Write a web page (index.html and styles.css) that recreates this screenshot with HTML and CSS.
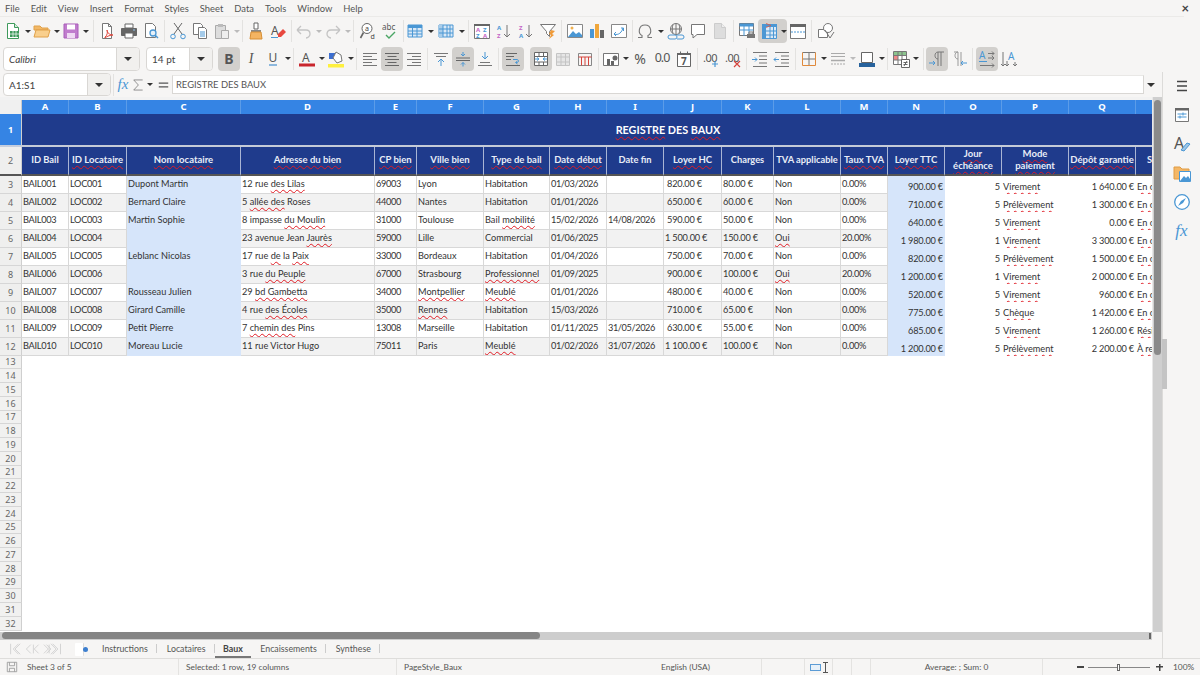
FILE: index.html
```html
<!DOCTYPE html>
<html lang="fr">
<head>
<meta charset="utf-8">
<title>Baux</title>
<link rel="stylesheet" href="styles.css">
</head>
<body>
<div class="app">
<nav class="menu">
<span>File</span><span>Edit</span><span>View</span><span>Insert</span><span>Format</span><span>Styles</span><span>Sheet</span><span>Data</span><span>Tools</span><span>Window</span><span>Help</span>
<b class="close">×</b>
</nav>

<div class="toolbar t1">
<i class="btn"><svg viewBox="0 0 18 18"><path d="M3.500 1.500h7l4 4v11h-11z" fill="#fff" stroke="#3f9a5c"/><path d="M10.500 1.500v4h4" fill="#d5ecd9" stroke="#3f9a5c"/><path d="M6 9h9v6H6z" fill="#3f9a5c"/><path d="M9 9v6M12 9v6M6 12h9" stroke="#fff" stroke-width=".7"/></svg></i><i class="dd"></i>
<i class="btn"><svg viewBox="0 0 18 18"><path d="M1 4h6l2 2h6v2H1z" fill="#f2b866" stroke="#e0a14a"/><path d="M1 15l2-7h14l-2 7z" fill="#f9cf8d" stroke="#e0a14a"/></svg></i><i class="dd"></i>
<i class="btn"><svg viewBox="0 0 18 18"><path d="M2 2h14v14H2z" fill="#c07ccd" stroke="#a95cb9"/><path d="M5 2.500h8v5H5z" fill="#fff"/><path d="M5 11h8v5H5z" fill="#efd9f3"/></svg></i><i class="dd"></i>
<i class="sep w7"></i>
<i class="btn"><svg viewBox="0 0 18 18"><path d="M4.500 1.500h6l3 3v12h-9z" fill="#fff" stroke="#777"/><path d="M10.500 1.500v3h3" fill="none" stroke="#777"/><path d="M7 15c2-1 3-5 2-7 0 3 3 5 6 5-2 0-6 1-8 3z" fill="none" stroke="#e0483e"/></svg></i>
<i class="btn"><svg viewBox="0 0 18 18"><path d="M5 2h8v4H5z" fill="#fff" stroke="#666"/><path d="M1.500 6.500h15v7h-15z" fill="#666" stroke="#666"/><path d="M5 11h8v5H5z" fill="#fff" stroke="#666"/><path d="M13 8h2" stroke="#8ec1ea"/></svg></i>
<i class="btn"><svg viewBox="0 0 18 18"><path d="M3.500 1.500h7l3 3v11h-10z" fill="#fff" stroke="#777"/><circle cx="11" cy="11" r="3" fill="#e6f1fa" stroke="#4a97d4" stroke-width="1.300"/><path d="M13 13l3 3" stroke="#4a97d4" stroke-width="1.500"/></svg></i>
<i class="sep"></i>
<i class="btn"><svg viewBox="0 0 18 18" fill="none" stroke="#666"><path d="M5 1l8 11M13 1L5 12"/><circle cx="4" cy="14.500" r="2.300" stroke="#4a97d4"/><circle cx="14" cy="14.500" r="2.300" stroke="#4a97d4"/></svg></i>
<i class="btn"><svg viewBox="0 0 18 18"><path d="M2.500 1.500h7l2 2v9h-9z" fill="#fff" stroke="#777"/><path d="M7.500 5.500h6l2 2v9h-8z" fill="#fff" stroke="#777"/><path d="M9 10h5M9 12h5M9 14h5" stroke="#4a97d4"/></svg></i>
<i class="btn"><svg viewBox="0 0 18 18"><path d="M2.500 3.500h10v13h-10z" fill="#ddd" stroke="#aaa"/><path d="M5 2h5v3H5z" fill="#bbb"/><path d="M8.500 8.500h7v8h-7z" fill="#eee" stroke="#aaa"/></svg></i><i class="dd off"></i>
<i class="sep"></i>
<i class="btn"><svg viewBox="0 0 18 18"><path d="M7 1h4v6H7z" fill="#fff" stroke="#666"/><path d="M4 8h10v2H4z" fill="#888"/><path d="M4 10h10l1 7H3z" fill="#f4b462" stroke="#d78f35"/></svg></i>
<i class="btn"><svg viewBox="0 0 18 18"><text x="2" y="13" class="ig">A</text><path d="M2 15.500h7" stroke="#4a97d4"/><path d="M9 12l5-5 3 3-5 5H9z" fill="#e8483f"/></svg></i>
<i class="sep n4"></i>
<i class="btn"><svg viewBox="0 0 18 18" fill="none" stroke="#c4c4c4" stroke-width="1.300"><path d="M2 8l4-4M2 8l4 4M2 8h9c3 0 4 2 4 4s-2 4-4 4"/></svg></i><i class="dd off"></i>
<i class="btn"><svg viewBox="0 0 18 18" fill="none" stroke="#c4c4c4" stroke-width="1.300"><path d="M16 8l-4-4M16 8l-4 4M16 8H7c-3 0-4 2-4 4s2 4 4 4"/></svg></i><i class="dd off"></i>
<i class="sep w6"></i>
<i class="btn"><svg viewBox="0 0 18 18"><circle cx="8" cy="6.500" r="5" fill="#fff" stroke="#666"/><path d="M4.500 10.500L1.500 16" stroke="#666" stroke-width="1.600"/><text x="6" y="9" class="is">a</text><text x="11.500" y="17" class="is">d</text></svg></i>
<i class="btn"><svg viewBox="0 0 18 18"><text x="1" y="8" class="it">abc</text><path d="M5 13l3 3 6-6" fill="none" stroke="#4aa564" stroke-width="1.400"/></svg></i>
<i class="sep n3"></i>
<i class="btn"><svg viewBox="0 0 18 18"><path d="M2 3h14v12H2z" fill="#dbe9f6" stroke="#4a97d4"/><path d="M2 3h14v3H2z" fill="#4a97d4"/><path d="M2 9h14M2 12h14M6.500 3v12M11 3v12" stroke="#4a97d4"/></svg></i><i class="dd wide"></i>
<i class="btn"><svg viewBox="0 0 18 18"><path d="M2 3h14v12H2z" fill="#dbe9f6" stroke="#4a97d4"/><path d="M2 3h4v12H2z" fill="#a9cdea"/><path d="M2 7h14M2 11h14M6 3v12M10 3v12M13 3v12" stroke="#4a97d4"/></svg></i><i class="dd wide"></i>
<i class="sep"></i>
<i class="btn"><svg viewBox="0 0 18 18"><path d="M1.500 2.500h15v14h-15z" fill="#fff" stroke="#777"/><path d="M1 2h16v2H1z" fill="#666"/><text x="3" y="9.500" class="ix p">A</text><text x="10" y="9.500" class="ix b">Z</text><text x="3" y="15.500" class="ix b">Z</text><text x="10" y="15.500" class="ix p">A</text></svg></i>
<i class="btn"><svg viewBox="0 0 18 18"><text x="2" y="8" class="ix b">A</text><text x="2" y="16" class="ix p">Z</text><path d="M12 3v12M9 12l3 3 3-3" fill="none" stroke="#777"/></svg></i>
<i class="btn"><svg viewBox="0 0 18 18"><text x="2" y="8" class="ix p">Z</text><text x="2" y="16" class="ix b">A</text><path d="M12 3v12M9 12l3 3 3-3" fill="none" stroke="#777"/></svg></i>
<i class="btn"><svg viewBox="0 0 18 18"><path d="M1.500 2.500h15l-6 7v5l-3-3v-2z" fill="#fff" stroke="#777"/><path d="M12 8l4 1-3 3 2 1-5 4 2-4-2-1z" fill="#ef9a38"/></svg></i>
<i class="sep"></i>
<i class="btn"><svg viewBox="0 0 18 18"><path d="M1.500 2.500h15v13h-15z" fill="#fff" stroke="#888"/><path d="M2 15l5-6 3 3 3-2 3 3v2z" fill="#4a97d4"/><circle cx="6" cy="6" r="1.500" fill="#f0b04f"/></svg></i>
<i class="btn"><svg viewBox="0 0 18 18"><path d="M2 7h4v9H2z" fill="#4a97d4"/><path d="M7 2h4v14H7z" fill="#f0a73c"/><path d="M12 8h4v8h-4z" fill="#666"/></svg></i>
<i class="btn"><svg viewBox="0 0 18 18"><path d="M1.500 2.500h15v13h-15z" fill="#fff" stroke="#888"/><path d="M4 12c2 1 7 1 9-6M11 6h2.500v3M6 14l-2-2 2-2" fill="none" stroke="#4a97d4"/></svg></i>
<i class="sep n4"></i>
<i class="btn"><svg viewBox="0 0 18 18"><path d="M2 15.500h4v-2C2 12 2 3 9 3s7 9 3 10.500v2h4" fill="none" stroke="#777" stroke-width="1.100"/></svg></i><i class="dd wide"></i>
<i class="btn"><svg viewBox="0 0 18 18" fill="none" stroke="#777"><circle cx="9" cy="7" r="5.500"/><path d="M3.500 7h11M9 1.500v11M6 2.500c-1 3-1 6 0 9M12 2.500c1 3 1 6 0 9"/><path d="M3 13h5a2 2 0 0 1 0 4H3a2 2 0 0 1 0-4zM10 13h5a2 2 0 0 1 0 4h-5" stroke="#4a97d4"/></svg></i>
<i class="btn"><svg viewBox="0 0 18 18"><path d="M2.500 2.500h13v10H8l-4 3.500v-3.500H2.500z" fill="#fff" stroke="#777"/></svg></i>
<i class="btn"><svg viewBox="0 0 18 18"><path d="M3.500 1.500h7l4 4v11h-11z" fill="#ddd" stroke="#ccc"/><path d="M10.500 1.500v4h4" fill="#eee" stroke="#ccc"/></svg></i>
<i class="sep"></i>
<i class="btn"><svg viewBox="0 0 18 18"><path d="M1.500 1.500h14v12h-14z" fill="#fff" stroke="#777"/><path d="M1.500 1.500h14v3h-14z" fill="#4a97d4"/><path d="M1.500 8h14M6 4v10M11 4v10" stroke="#4a97d4"/><path d="M9 12h8v4H9z" fill="#777"/><path d="M11 10h4v2h-4z" fill="#fff" stroke="#777"/></svg></i>
<span class="hl"><i class="btn"><svg viewBox="0 0 18 18"><path d="M2.500 2.500h14v14h-14z" fill="#dbe9f6" stroke="#4a97d4"/><path d="M2 2h15v3H2zM2 2h4v15H2z" fill="#4a97d4"/><path d="M2 9h15M2 13h15M10 4v13M13.500 4v13" stroke="#4a97d4"/><path d="M6 1.500l5 2-5 2" fill="none" stroke="#e9573f" stroke-width=".8"/></svg></i><i class="dd"></i></span>
<i class="btn"><svg viewBox="0 0 18 18"><path d="M1.500 2.500h15v14h-15z" fill="#fff" stroke="#777"/><path d="M1 2h16v3H1z" fill="#666"/><path d="M2 10h14" stroke="#4a97d4" stroke-dasharray="2 1"/></svg></i>
<i class="sep w6"></i>
<i class="btn"><svg viewBox="0 0 18 18" fill="none" stroke="#777"><path d="M1.500 7.500h9v8h-9z" fill="#fff"/><circle cx="11" cy="6" r="4.500" fill="#fff"/><path d="M8 8l5 8 4-6"/></svg></i>
</div>

<div class="toolbar t2">
<span class="combo name"><em>Calibri</em><i class="cb"></i></span>
<span class="combo size"><em>14 pt</em><i class="cb"></i></span>
<span class="hl"><i class="btn"><b class="gl bold">B</b></i></span>
<i class="btn"><b class="gl ital">I</b></i>
<i class="btn"><b class="gl und">U</b></i><i class="dd"></i>
<i class="sep"></i>
<i class="btn"><svg viewBox="0 0 18 18"><text x="4" y="12" class="ig">A</text><path d="M1 13.500h16v3H1z" fill="#c9252d"/></svg></i><i class="dd"></i>
<i class="btn"><svg viewBox="0 0 18 18"><path d="M2 3h6v6H2z" fill="#3d6fd1"/><path d="M6 8l3-6 5 3 1 6-5 2z" fill="#fff" stroke="#777"/><path d="M1 14h16v3.500H1z" fill="#fef03f"/></svg></i><i class="dd"></i>
<i class="sep"></i>
<i class="btn"><svg viewBox="0 0 18 18" stroke="#777"><path d="M2 3.500h14M2 6.500h9M2 9.500h14M2 12.500h9M2 15.500h14"/></svg></i>
<span class="hl"><i class="btn"><svg viewBox="0 0 18 18" stroke="#666"><path d="M2 3.500h14M4.500 6.500h9M2 9.500h14M4.500 12.500h9M2 15.500h14"/></svg></i></span>
<i class="btn"><svg viewBox="0 0 18 18" stroke="#777"><path d="M2 3.500h14M7 6.500h9M2 9.500h14M7 12.500h9M2 15.500h14"/></svg></i>
<i class="sep"></i>
<i class="btn"><svg viewBox="0 0 18 18" fill="none" stroke="#777"><path d="M2 3.500h14M4 6.500h10"/><path d="M9 16V9M6 12l3-3 3 3" stroke="#4a97d4"/></svg></i>
<span class="hl"><i class="btn"><svg viewBox="0 0 18 18" fill="none" stroke="#666"><path d="M2 8h14M2 10.500h14"/><path d="M9 2v4M7 4l2 2 2-2M9 16.500v-4M7 14.500l2-2 2 2" stroke="#4a97d4"/></svg></i></span>
<i class="btn"><svg viewBox="0 0 18 18" fill="none" stroke="#777"><path d="M2 15.500h14M4 12.500h10"/><path d="M9 2v7M6 6l3 3 3-3" stroke="#4a97d4"/></svg></i>
<i class="sep w6"></i>
<span class="hl"><i class="btn"><svg viewBox="0 0 18 18" fill="none" stroke="#666"><path d="M2 3.500h11M2 6.500h8M2 9.500h5M2 15.500h14"/><path d="M9 9.500h4c2 0 2 3 0 3h-1M13.500 11l-2 1.500 2 1.500" stroke="#4a97d4"/></svg></i></span>
<span class="hl sp6"><i class="btn"><svg viewBox="0 0 18 18" fill="none" stroke="#666"><path d="M2.500 2.500h13v13h-13z" fill="#fff"/><path d="M2.500 6.500h13M2.500 12h13M7 2.500v4M11.500 2.500v4M7 12v3.500M11.500 12v3.500"/><path d="M3 9h4M15 9h-4M5 7.500L7 9l-2 1.500M13 7.500L11 9l2 1.500" stroke="#4a97d4"/></svg></i></span>
<i class="btn"><svg viewBox="0 0 18 18" stroke="#c4c4c4"><path d="M2.500 3.500h13v12h-13z" fill="#e6e6e6"/><path d="M2.500 7h13M2.500 12h13M7 3.500v12M11.500 3.500v12"/></svg></i>
<i class="btn"><svg viewBox="0 0 18 18" fill="none" stroke="#d6453d"><path d="M2.500 3.500h13v12h-13z" stroke="#888"/><path d="M2.500 7h13M5.500 7v8.500M9 7v8.500M12.500 7v8.500"/></svg></i>
<i class="sep n4"></i>
<i class="btn"><svg viewBox="0 0 18 18"><path d="M1.500 3.500h15v12h-15z" fill="#fff" stroke="#777"/><path d="M5 9h3v6H5zM9 11h3v4H9z" fill="#666"/><circle cx="13" cy="8" r="2.500" fill="#666"/></svg></i><i class="dd"></i>
<i class="btn"><b class="gl pct">%</b></i>
<i class="btn"><b class="gl pct zz">0.0</b></i>
<i class="btn"><svg viewBox="0 0 18 18"><path d="M2.500 3.500h13v13h-13z" fill="#fff" stroke="#666"/><path d="M2 3h14v2H2zM5 1.500h1v3H5zM12 1.500h1v3h-1z" fill="#666"/><text x="6" y="15" class="ig mid">7</text></svg></i>
<i class="sep"></i>
<i class="btn"><svg viewBox="0 0 18 18"><text x="1" y="12" class="ig dec">.00</text><path d="M13 11v6M10 14h6" stroke="#4a97d4" stroke-width="1.200"/></svg></i>
<i class="btn"><svg viewBox="0 0 18 18"><text x="1" y="12" class="ig dec">.00</text><path d="M10 11l6 6M16 11l-6 6" stroke="#d6453d" stroke-width="1.200"/></svg></i>
<i class="sep"></i>
<i class="btn"><svg viewBox="0 0 18 18" fill="none" stroke="#777"><path d="M2 2.500h14M8 6h8M8 9.500h8M8 13h8M2 16.500h14"/><path d="M1 9.500h5M4 7.500l2 2-2 2" stroke="#4a97d4"/></svg></i>
<i class="btn"><svg viewBox="0 0 18 18" fill="none" stroke="#777"><path d="M2 2.500h14M8 6h8M8 9.500h8M8 13h8M2 16.500h14"/><path d="M6 9.500H1M3 7.500l-2 2 2 2" stroke="#4a97d4"/></svg></i>
<i class="sep"></i>
<i class="btn"><svg viewBox="0 0 18 18" fill="none" stroke="#777"><path d="M2.500 9h13M9 2.500v13M2.500 2.500h13"/><path d="M2.500 2.500v13h13v-13" stroke="#e08a3c"/></svg></i><i class="dd"></i>
<i class="btn"><svg viewBox="0 0 18 18" stroke="#aaa"><path d="M2 3.500h14M2 6.500h14" stroke-width="1.200"/><path d="M2 10.500h14" stroke-width="1.500"/><path d="M2 14h14" stroke-dasharray="2 1"/></svg></i><i class="dd off"></i>
<i class="btn"><svg viewBox="0 0 18 18"><path d="M3.500 2.500h11v10h-11z" fill="#fff" stroke="#666"/><path d="M1 13h16v4H1z" fill="#27629c"/></svg></i><i class="dd"></i>
<i class="sep"></i>
<i class="btn"><svg viewBox="0 0 18 18"><path d="M1.500 1.500h13v13h-13z" fill="#fff" stroke="#777"/><path d="M2 2h12v3H2z" fill="#8bc48d"/><path d="M2 5h4v5H2z" fill="#e88"/><path d="M1.500 5.500h13M1.500 10h13M6 2v12M10 2v12" stroke="#777"/><path d="M9.500 9.500h8v8h-8z" fill="#fff" stroke="#666"/><path d="M11.500 12.500h4M11.500 14.500h4M12 16l3-5" stroke="#666"/></svg></i><i class="dd"></i>
<i class="sep w7"></i>
<span class="hl"><i class="btn"><svg viewBox="0 0 18 18" fill="none" stroke="#777"><path d="M10 16V2h6M13 2v14M10 2C6 2 6 9 10 9"/><path d="M1 13h6M5 11l2 2-2 2" stroke="#4a97d4"/></svg></i></span>
<i class="btn"><svg viewBox="0 0 18 18" fill="none" stroke="#999"><path d="M6 16V2h-4M9 2v14M6 2c-4 0-4 7 0 7" transform="translate(2 0)"/><path d="M17 13h-6M13 11l-2 2 2 2" stroke="#4a97d4"/></svg></i>
<i class="sep w6"></i>
<span class="hl"><i class="btn"><svg viewBox="0 0 18 18" fill="none" stroke="#777"><text x="1" y="9" class="ig bl">A</text><path d="M1 11.500h8" stroke="#4a97d4"/><path d="M10 3.500h6M14 1.500l2 2-2 2M10 8h6M14 6l2 2-2 2M2 15.500h14M14 13.500l2 2-2 2"/></svg></i></span>
<i class="btn"><svg viewBox="0 0 18 18" fill="none" stroke="#777"><text x="8" y="10" class="ig bl">A</text><path d="M3 2v14M1 14l2 2 2-2M7 11v5M5 14l2 2 2-2M15 12v4M13 14l2 2 2-2"/></svg></i>
</div>

<div class="workspace">
<div class="left">
<div class="formula">
<span class="combo ref"><em>A1:S1</em><i class="cb"></i></span>
<i class="sep"></i>
<b class="fxg">fx</b>
<i class="btn sm"><svg viewBox="0 0 18 18"><path d="M15 2.500H3.500L9.500 9l-6 6.500H15" fill="none" stroke="#777"/></svg></i><i class="dd sum"></i>
<i class="btn eq"><svg viewBox="0 0 18 18" stroke="#555" stroke-width="1.300"><path d="M4 7h10M4 11h10"/></svg></i>
<span class="input">REGISTRE DES BAUX</span>
<i class="dd fdd"></i>
</div>

<div class="gridarea">
<div class="viewport">
<div class="sheet">
<div class="ch0"></div><div class="col">A</div><div class="col">B</div><div class="col">C</div><div class="col">D</div><div class="col">E</div><div class="col">F</div><div class="col">G</div><div class="col">H</div><div class="col">I</div><div class="col">J</div><div class="col">K</div><div class="col">L</div><div class="col">M</div><div class="col">N</div><div class="col">O</div><div class="col">P</div><div class="col">Q</div><div class="col">R</div><div class="col">S</div>

<div class="rh sel">1</div><div class="title"><u>REGISTRE</u> DES <u>BAUX</u></div>

<div class="rh tall">2</div>
<div class="hd">ID Bail</div><div class="hd"><u>ID Locataire</u></div><div class="hd"><u>Nom locataire</u></div><div class="hd"><u>Adresse du bien</u></div><div class="hd"><u>CP bien</u></div><div class="hd"><u>Ville bien</u></div><div class="hd"><u>Type de bail</u></div><div class="hd"><u>Date début</u></div><div class="hd">Date fin</div><div class="hd"><u>Loyer HC</u></div><div class="hd">Charges</div><div class="hd">TVA applicable</div><div class="hd"><u>Taux TVA</u></div><div class="hd"><u>Loyer TTC</u></div><div class="hd two"><u>Jour échéance</u></div><div class="hd two"><u>Mode paiement</u></div><div class="hd"><u>Dépôt garantie</u></div><div class="hd">Statut</div><div class="hd"></div>

<div class="rh">3</div><div class="c">BAIL001</div><div class="c">LOC001</div><div class="c bl">Dupont Martin</div><div class="c">12 rue <u>des Lilas</u></div><div class="c">69003</div><div class="c">Lyon</div><div class="c">Habitation</div><div class="c">01/03/2026</div><div class="c"></div><div class="c m">820.00 €</div><div class="c">80.00 €</div><div class="c">Non</div><div class="c">0.00%</div><div class="n bl">900.00 €</div><div class="n">5</div><div class="t"><u>Virement</u></div><div class="n">1 640.00 €</div><div class="t"><u>En cours</u></div><div class="t"></div>
<div class="rh">4</div><div class="c z">BAIL002</div><div class="c z">LOC002</div><div class="c bl">Bernard Claire</div><div class="c z">5 <u>allée des</u> Roses</div><div class="c z">44000</div><div class="c z">Nantes</div><div class="c z">Habitation</div><div class="c z">01/01/2026</div><div class="c z"></div><div class="c z m">650.00 €</div><div class="c z">60.00 €</div><div class="c z">Non</div><div class="c z">0.00%</div><div class="n bl">710.00 €</div><div class="n">5</div><div class="t"><u>Prélèvement</u></div><div class="n">1 300.00 €</div><div class="t"><u>En cours</u></div><div class="t"></div>
<div class="rh">5</div><div class="c">BAIL003</div><div class="c">LOC003</div><div class="c bl">Martin Sophie</div><div class="c">8 impasse <u>du Moulin</u></div><div class="c">31000</div><div class="c">Toulouse</div><div class="c">Bail <u>mobilité</u></div><div class="c">15/02/2026</div><div class="c">14/08/2026</div><div class="c m">590.00 €</div><div class="c">50.00 €</div><div class="c">Non</div><div class="c">0.00%</div><div class="n bl">640.00 €</div><div class="n">5</div><div class="t"><u>Virement</u></div><div class="n">0.00 €</div><div class="t"><u>En cours</u></div><div class="t"></div>
<div class="rh">6</div><div class="c z">BAIL004</div><div class="c z">LOC004</div><div class="c bl"></div><div class="c z">23 avenue Jean <u>Jaurès</u></div><div class="c z">59000</div><div class="c z">Lille</div><div class="c z">Commercial</div><div class="c z">01/06/2025</div><div class="c z"></div><div class="c z">1 500.00 €</div><div class="c z">150.00 €</div><div class="c z"><u>Oui</u></div><div class="c z">20.00%</div><div class="n bl">1 980.00 €</div><div class="n">1</div><div class="t"><u>Virement</u></div><div class="n">3 300.00 €</div><div class="t"><u>En cours</u></div><div class="t"></div>
<div class="rh">7</div><div class="c">BAIL005</div><div class="c">LOC005</div><div class="c bl">Leblanc Nicolas</div><div class="c">17 rue <u>de</u> la <u>Paix</u></div><div class="c">33000</div><div class="c">Bordeaux</div><div class="c">Habitation</div><div class="c">01/04/2026</div><div class="c"></div><div class="c m">750.00 €</div><div class="c">70.00 €</div><div class="c">Non</div><div class="c">0.00%</div><div class="n bl">820.00 €</div><div class="n">5</div><div class="t"><u>Prélèvement</u></div><div class="n">1 500.00 €</div><div class="t"><u>En cours</u></div><div class="t"></div>
<div class="rh">8</div><div class="c z">BAIL006</div><div class="c z">LOC006</div><div class="c bl"></div><div class="c z">3 rue <u>du Peuple</u></div><div class="c z">67000</div><div class="c z">Strasbourg</div><div class="c z"><u>Professionnel</u></div><div class="c z">01/09/2025</div><div class="c z"></div><div class="c z m">900.00 €</div><div class="c z">100.00 €</div><div class="c z"><u>Oui</u></div><div class="c z">20.00%</div><div class="n bl">1 200.00 €</div><div class="n">1</div><div class="t"><u>Virement</u></div><div class="n">2 000.00 €</div><div class="t"><u>En cours</u></div><div class="t"></div>
<div class="rh">9</div><div class="c">BAIL007</div><div class="c">LOC007</div><div class="c bl">Rousseau Julien</div><div class="c">29 <u>bd Gambetta</u></div><div class="c">34000</div><div class="c"><u>Montpellier</u></div><div class="c"><u>Meublé</u></div><div class="c">01/01/2026</div><div class="c"></div><div class="c m">480.00 €</div><div class="c">40.00 €</div><div class="c">Non</div><div class="c">0.00%</div><div class="n bl">520.00 €</div><div class="n">5</div><div class="t"><u>Virement</u></div><div class="n">960.00 €</div><div class="t"><u>En cours</u></div><div class="t"></div>
<div class="rh">10</div><div class="c z">BAIL008</div><div class="c z">LOC008</div><div class="c bl">Girard Camille</div><div class="c z">4 rue <u>des Écoles</u></div><div class="c z">35000</div><div class="c z"><u>Rennes</u></div><div class="c z">Habitation</div><div class="c z">15/03/2026</div><div class="c z"></div><div class="c z m">710.00 €</div><div class="c z">65.00 €</div><div class="c z">Non</div><div class="c z">0.00%</div><div class="n bl">775.00 €</div><div class="n">5</div><div class="t"><u>Chèque</u></div><div class="n">1 420.00 €</div><div class="t"><u>En cours</u></div><div class="t"></div>
<div class="rh">11</div><div class="c">BAIL009</div><div class="c">LOC009</div><div class="c bl">Petit Pierre</div><div class="c">7 <u>chemin des</u> Pins</div><div class="c">13008</div><div class="c">Marseille</div><div class="c">Habitation</div><div class="c">01/11/2025</div><div class="c">31/05/2026</div><div class="c m">630.00 €</div><div class="c">55.00 €</div><div class="c">Non</div><div class="c">0.00%</div><div class="n bl">685.00 €</div><div class="n">5</div><div class="t"><u>Virement</u></div><div class="n">1 260.00 €</div><div class="t"><u>Résilié</u></div><div class="t"></div>
<div class="rh">12</div><div class="c z">BAIL010</div><div class="c z">LOC010</div><div class="c bl">Moreau Lucie</div><div class="c z">11 rue Victor Hugo</div><div class="c z">75011</div><div class="c z">Paris</div><div class="c z"><u>Meublé</u></div><div class="c z">01/02/2026</div><div class="c z">31/07/2026</div><div class="c z">1 100.00 €</div><div class="c z">100.00 €</div><div class="c z">Non</div><div class="c z">0.00%</div><div class="n bl">1 200.00 €</div><div class="n">5</div><div class="t"><u>Prélèvement</u></div><div class="n">2 200.00 €</div><div class="t"><u>À renouveler</u></div><div class="t"></div>

<div class="rh e">13</div><div class="blank"></div><div class="rh e">14</div><div class="blank"></div><div class="rh e">15</div><div class="blank"></div><div class="rh e">16</div><div class="blank"></div><div class="rh e">17</div><div class="blank"></div><div class="rh e">18</div><div class="blank"></div><div class="rh e">19</div><div class="blank"></div><div class="rh e">20</div><div class="blank"></div><div class="rh e">21</div><div class="blank"></div><div class="rh e">22</div><div class="blank"></div><div class="rh e">23</div><div class="blank"></div><div class="rh e">24</div><div class="blank"></div><div class="rh e">25</div><div class="blank"></div><div class="rh e">26</div><div class="blank"></div><div class="rh e">27</div><div class="blank"></div><div class="rh e">28</div><div class="blank"></div><div class="rh e">29</div><div class="blank"></div><div class="rh e">30</div><div class="blank"></div><div class="rh e">31</div><div class="blank"></div><div class="rh e">32</div><div class="blank"></div>
</div>
</div>
<div class="vscroll"><div class="vthumb"></div></div>
</div>

<div class="hscroll"><div class="hthumb"></div><i class="hgrip"></i></div>

<div class="tabs">
<span class="nav">
<svg viewBox="0 0 60 16" fill="none" stroke="#cfcfcf"><path d="M1 2v12M10 2L4 8l6 6M12 2L6 8l6 6M24 3l-5 5 5 5M27 3v10M33 3l-5 5 5 5M39 3l5 5-5 5M45 3v10M42 3l5 5-5 5M49 2l6 6-6 6M47 2l6 6-6 6M58 2v12"/></svg>
</span>
<span class="newsheet"><i class="page"></i><i class="dot"></i></span>
<span class="tab">Instructions</span><span class="tab">Locataires</span><span class="tab on">Baux</span><span class="tab">Encaissements</span><span class="tab">Synthese</span>
</div>
</div>

<aside class="side">
<div class="sb ham"><svg viewBox="0 0 18 18" stroke="#444" stroke-width="1.300"><path d="M4 4.500h10M4 9h10M4 13.500h10"/></svg></div>
<div class="sb"><svg viewBox="0 0 18 18"><path d="M2.500 2.500h13v13h-13z" fill="#fff" stroke="#777"/><path d="M2 2h14v2.500H2z" fill="#666"/><path d="M4.500 8h9M4.500 11h9" stroke="#4a97d4"/><path d="M10 6.500v3M7 9.500v3" stroke="#4a97d4"/></svg></div>
<div class="sb"><svg viewBox="0 0 18 18"><text x="1" y="14" class="ig big2">A</text><path d="M8 15l6-7 3 1-6 7z" fill="#9cc6e8" stroke="#4a97d4"/></svg></div>
<div class="sb"><svg viewBox="0 0 18 18"><path d="M1 3h6l2 2h7v10H1z" fill="#f4b766" stroke="#e09c45"/><path d="M6.500 7.500h11v10h-11z" fill="#fff" stroke="#4a97d4"/><path d="M7 17l4-5 2 2 2-2 2 3v2z" fill="#4a97d4"/></svg></div>
<div class="sb"><svg viewBox="0 0 18 18"><circle cx="9" cy="9" r="7.300" fill="#fff" stroke="#4a97d4" stroke-width="1.300"/><path d="M13 5L10 10 5 13l3-5z" fill="#4a97d4"/></svg></div>
<div class="sb fx">fx</div>
<i class="grip"></i>
</aside>
</div>

<footer class="status">
<span class="st s1"><svg viewBox="0 0 14 14" fill="none" stroke="#999"><path d="M1.500 1.500h11v11h-11zM4 1.500v4h6v-4M4 12.500v-4h6v4"/></svg><em>Sheet 3 of 5</em></span>
<span class="st s2">Selected: 1 row, 19 columns</span>
<span class="st s3">PageStyle_Baux</span>
<span class="st s4">English (USA)</span>
<span class="st s5"></span>
<span class="st s6"><i class="ins"></i><i class="cur"></i></span>
<span class="st s7"></span>
<span class="st s7"></span>
<span class="st s8">Average: ; Sum: 0</span>
<span class="st s9"><i class="mn"></i><i class="slide"><i class="knob"></i></i><i class="pl"></i></span>
<span class="st s10">100%</span>
</footer>
</div>
</body>
</html>
```
FILE: styles.css
```css
* { box-sizing: border-box; }
html, body { margin: 0; padding: 0; height: 100%; }
body { font-family: "Lato", "Noto Sans", sans-serif; font-size: 10px; color: #444; background: #f6f5f4; overflow: hidden; }
i, em, u { font-style: normal; text-decoration: none; }
.app { width: 1200px; height: 675px; display: flex; flex-direction: column; }

.menu { height: 17px; display: flex; align-items: center; padding-left: 5px; gap: 11px; font-size: 9.400px; color: #555; position: relative; border-bottom: 1px solid #ebeae8; margin-right: 16px; }
.close { position: absolute; right: -5px; top: 1px; font-size: 13px; line-height: 14px; color: #444; }

.toolbar { display: flex; align-items: center; padding-left: 2px; }
.t1 { height: 28px; }
.t2 { height: 27px; }
.btn { width: 22px; height: 22px; display: flex; align-items: center; justify-content: center; flex: none; }
.btn svg { width: 18px; height: 18px; display: block; }
.dd { width: 7px; height: 22px; flex: none; display: flex; align-items: center; justify-content: center; }
.dd.wide { width: 9px; }
.dd::after { content: ""; border: 3px solid transparent; border-top: 3.500px solid #333; border-bottom: 0; }
.dd.off::after { border-top-color: #bbb; }
.sep { width: 5px; height: 22px; flex: none; position: relative; }
.sep::after { content: ""; position: absolute; left: 2px; top: 0; bottom: 0; width: 1px; background: #e3e2e0; }
.sep.w7 { width: 7px; }
.sep.w7::after { left: 4px; }
.sep.w6 { width: 6px; }
.sep.n4 { width: 4px; }
.sep.n3 { width: 3px; }
.hl { display: flex; background: #d2d0cd; border-radius: 4px; height: 24px; align-items: center; flex: none; }
.sp6 { margin-left: 6px; }

.combo { display: flex; height: 24px; background: #fff; border: 1px solid #d9d7d4; border-radius: 4px; flex: none; align-items: center; overflow: hidden; }
.combo em { flex: 1; padding-left: 5px; font-size: 10px; color: #444; }
.cb { height: 100%; background: #f1f0ee; border-left: 1px solid #d9d7d4; display: flex; align-items: center; justify-content: center; width: 23px; }
.cb::after { content: ""; border: 4px solid transparent; border-top: 4.500px solid #333; border-bottom: 0; }
.combo.name { width: 137px; margin-left: 1px; }
.combo.name em { font-style: italic; }
.combo.size { width: 67px; margin-left: 6px; margin-right: 5px; }
.combo.ref { width: 108px; height: 23px; margin-left: 3px; }

b.gl { font-size: 14px; color: #555; font-weight: 700; line-height: 1; display: block; font-family: "Noto Sans", sans-serif; }
b.gl.ital { font-style: italic; font-weight: 400; font-family: "Liberation Serif", serif; }
b.gl.und { font-weight: 400; font-size: 12px; border-bottom: 2px solid #8db8dd; line-height: 13px; }
b.gl.pct { font-weight: 400; font-size: 14px; }
b.gl.pct.zz { font-size: 12.500px; letter-spacing: -1px; }

svg text { font-family: "Noto Sans", sans-serif; stroke: none; }
.ig { font-size: 12px; fill: #555; }
.ig.big2 { font-size: 16px; }
.ig.mid { font-size: 10px; font-weight: 700; }
.ig.dec { font-size: 11px; letter-spacing: -.5px; }
.ig.bl { fill: #4a97d4; font-size: 10px; }
.is { font-size: 7px; fill: #444; }
.it { font-size: 8px; fill: #555; }
.ix { font-size: 6px; font-weight: 700; }
.ix.b { fill: #4a97d4; }
.ix.p { fill: #c566c6; }

.workspace { flex: 1; display: flex; min-height: 0; }
.left { width: 1162px; display: flex; flex-direction: column; min-height: 0; }
.formula { height: 25px; flex: none; display: flex; align-items: center; }
.fxg { width: 14px; text-align: center; font-family: "Liberation Serif", serif; font-style: italic; font-weight: 400; font-size: 15px; color: #4a97d4; }
.btn.sm { width: 15px; }
.btn.sm svg { width: 14px; height: 14px; }
.dd.sum { width: 10px; }
.btn.eq { width: 17px; }
.input { width: 972px; height: 19px; background: #fff; border: 1px solid #d9d7d4; border-top-color: #e9e8e6; font-size: 9.400px; line-height: 17px; padding-left: 3px; color: #555; flex: none; }
.fdd { width: 14px; }
.fdd::after { border-width: 4px; border-top-width: 4.500px; border-bottom: 0; }

.gridarea { height: 535px; display: flex; background: #fff; }
.viewport { width: 1152px; overflow: hidden; padding-top: 3px; background: linear-gradient(#f2f2f2 3px, #fff 3px); }
.sheet { display: grid; width: 1314px; grid-template-columns: 22px 47px 58px 114px 134px 42px 67px 66px 57px 57px 58px 52px 67px 47px 57px 57px 67px 67px 48px 130px; grid-template-rows: 14px 33px 28.500px repeat(10, 18px) repeat(20, 13.750px); font-size: 9.200px; color: #333; }
.ch0 { background: #f0f0f0; border-right: 1px solid #ccc; }
.col { background: #3584e4; color: #fff; text-align: center; font-size: 9.500px; font-weight: 700; line-height: 14px; border-right: 1px solid #5b9ce8; font-family: "Noto Sans", sans-serif; }
.rh { background: #efefee; border-right: 1px solid #cfcfcf; border-bottom: 1px solid #d6d6d6; color: #666; font-family: "Noto Sans", sans-serif; font-size: 9px; display: flex; align-items: center; justify-content: center; }
.rh.sel { background: #3584e4; color: #fff; font-weight: 700; border-bottom: 2px solid #c5cede; }
.rh.tall { border-bottom: 2px solid #555; }
.rh.e { background: #f1f1f0; }
.title { grid-column: 2 / -1; background: #1f3b8c; color: #fff; text-align: center; font-weight: 700; font-size: 10.800px; line-height: 31px; border-bottom: 2px solid #c5cbd8; }
.hd { background: #1f3b8c; color: #e9edf7; font-weight: 700; text-align: center; font-size: 9.300px; line-height: 12px; display: flex; align-items: center; justify-content: center; border-right: 1px solid #a9b5d4; border-bottom: 2px solid #555; white-space: nowrap; overflow: hidden; }
.hd u { font-size: 9.500px; }
.hd.two { white-space: normal; padding: 0 8px; }
u { text-decoration: underline wavy #e01b24 1px; text-underline-offset: 1.500px; }
.title u { text-underline-offset: 2px; }
.c { padding-left: 1px; line-height: 15px; border-right: 1px solid #d8d8d8; border-bottom: 1px solid #d8d8d8; white-space: nowrap; overflow: hidden; background: #fff; }
.c.z { background: #f2f2f2; }
.c.m { padding-left: 3px; }
.c.bl { background: #d6e5fa; border: 0; }
/* numeric columns: A, B, E, M use tighter digits; dates (H, I) tightest; money (J, K, N, Q) slightly */
.c:nth-child(20n+4), .c:nth-child(20n+5), .c:nth-child(20n+8), .c:nth-child(20n+16) { letter-spacing: -.3px; }
.c:nth-child(20n+11), .c:nth-child(20n+12) { letter-spacing: -.4px; }
.c:nth-child(20n+13), .c:nth-child(20n+14), .n { letter-spacing: -.2px; }
.n, .t { padding-top: 4px; line-height: 14px; white-space: nowrap; overflow: hidden; }
.n { text-align: right; padding-right: 2px; }
.n.bl { background: #d6e5fa; }
.t { padding-left: 1px; }
.blank { grid-column: 2 / -1; background: #fff; }

.vscroll { width: 10px; background: #cfcfcf; padding-top: 3px; border-left: 1px solid #e8e8e8; }
.vthumb { width: 7px; height: 255px; background: #8a8a8a; border-radius: 4px; margin-left: 1px; }

.hscroll { height: 8px; flex: none; background: #cdcdcd; position: relative; width: 1152px; }
.hthumb { width: 538px; height: 7px; margin-left: 2px; background: #858585; border-radius: 4px; }
.hgrip { position: absolute; right: 1px; top: 1px; width: 2px; height: 6px; background: #666; }

.tabs { height: 18px; flex: none; display: flex; align-items: center; font-size: 8.800px; color: #555; }
.nav { width: 60px; margin-left: 6px; height: 14px; display: flex; }
.nav svg { width: 60px; height: 14px; }
.newsheet { width: 17.500px; margin-left: 9px; display: flex; align-items: center; height: 16px; }
.page { width: 9px; height: 13px; background: #fff; border-radius: 1px; border-right: 1px solid #ddd; }
.dot { width: 5px; height: 5px; border-radius: 50%; background: #3d7fcf; margin-left: -1px; }
.tab { height: 18px; line-height: 17px; padding: 0 9.500px; position: relative; }
.tab::after { content: ""; position: absolute; right: 0; top: 4px; height: 9px; width: 1px; background: #ccc; }
.tab.on { font-weight: 700; border-bottom: 2px solid #777; color: #444; padding: 0 8px; }
.tab.on::after { display: none; }

.side { width: 38px; flex: none; border-left: 1px solid #dcdbd9; display: flex; flex-direction: column; align-items: center; position: relative; padding-top: 3px; }
.sb { width: 20px; height: 29px; display: flex; align-items: center; justify-content: center; flex: none; }
.sb svg { width: 18px; height: 18px; }
.ham { margin-bottom: 4px; height: 21px; }
.sb.fx { font-family: "Liberation Serif", serif; font-size: 17px; color: #4a97d4; font-style: italic; }
.grip { position: absolute; left: -1px; top: 267px; width: 5px; height: 50px; background: #c4c4c4; }

.status { height: 17px; flex: none; display: flex; align-items: center; border-top: 1px solid #dedddb; font-size: 8.400px; color: #555; }
.st { height: 100%; display: flex; align-items: center; border-right: 1px solid #e4e3e1; flex: none; white-space: nowrap; }
.s1 { width: 179px; padding-left: 6px; gap: 9px; }
.s1 svg { width: 12px; height: 12px; }
.s2 { width: 218px; padding-left: 7px; }
.s3 { width: 257px; padding-left: 7px; border-right: 0; }
.s4 { width: 108px; padding-left: 7px; }
.s5 { width: 43px; }
.s6 { width: 28px; gap: 2px; justify-content: center; }
.ins { width: 11px; height: 7px; border: 1px solid #5b9bd5; background: #e6f0f9; }
.cur { width: 5px; height: 11px; position: relative; border-top: 1px solid #555; border-bottom: 1px solid #555; }
.cur::before { content: ""; position: absolute; left: 2px; top: 0; bottom: 0; width: 1px; background: #555; }
.s7 { width: 19px; }
.s8 { width: 172px; justify-content: center; }
.s9 { width: 127px; gap: 4px; padding-left: 34px; border-right: 0; }
.mn { width: 7px; height: 1.500px; background: #444; }
.slide { width: 62px; height: 1px; background: #888; position: relative; }
.knob { position: absolute; left: 29px; top: -3px; width: 3px; height: 7px; border: 1px solid #666; background: #fff; }
.pl { width: 7px; height: 7px; margin-left: 2px; background: linear-gradient(#444,#444) center/7px 1.500px no-repeat, linear-gradient(#444,#444) center/1.500px 7px no-repeat; }
.s10 { padding-left: 3px; border-right: 0; }
```
